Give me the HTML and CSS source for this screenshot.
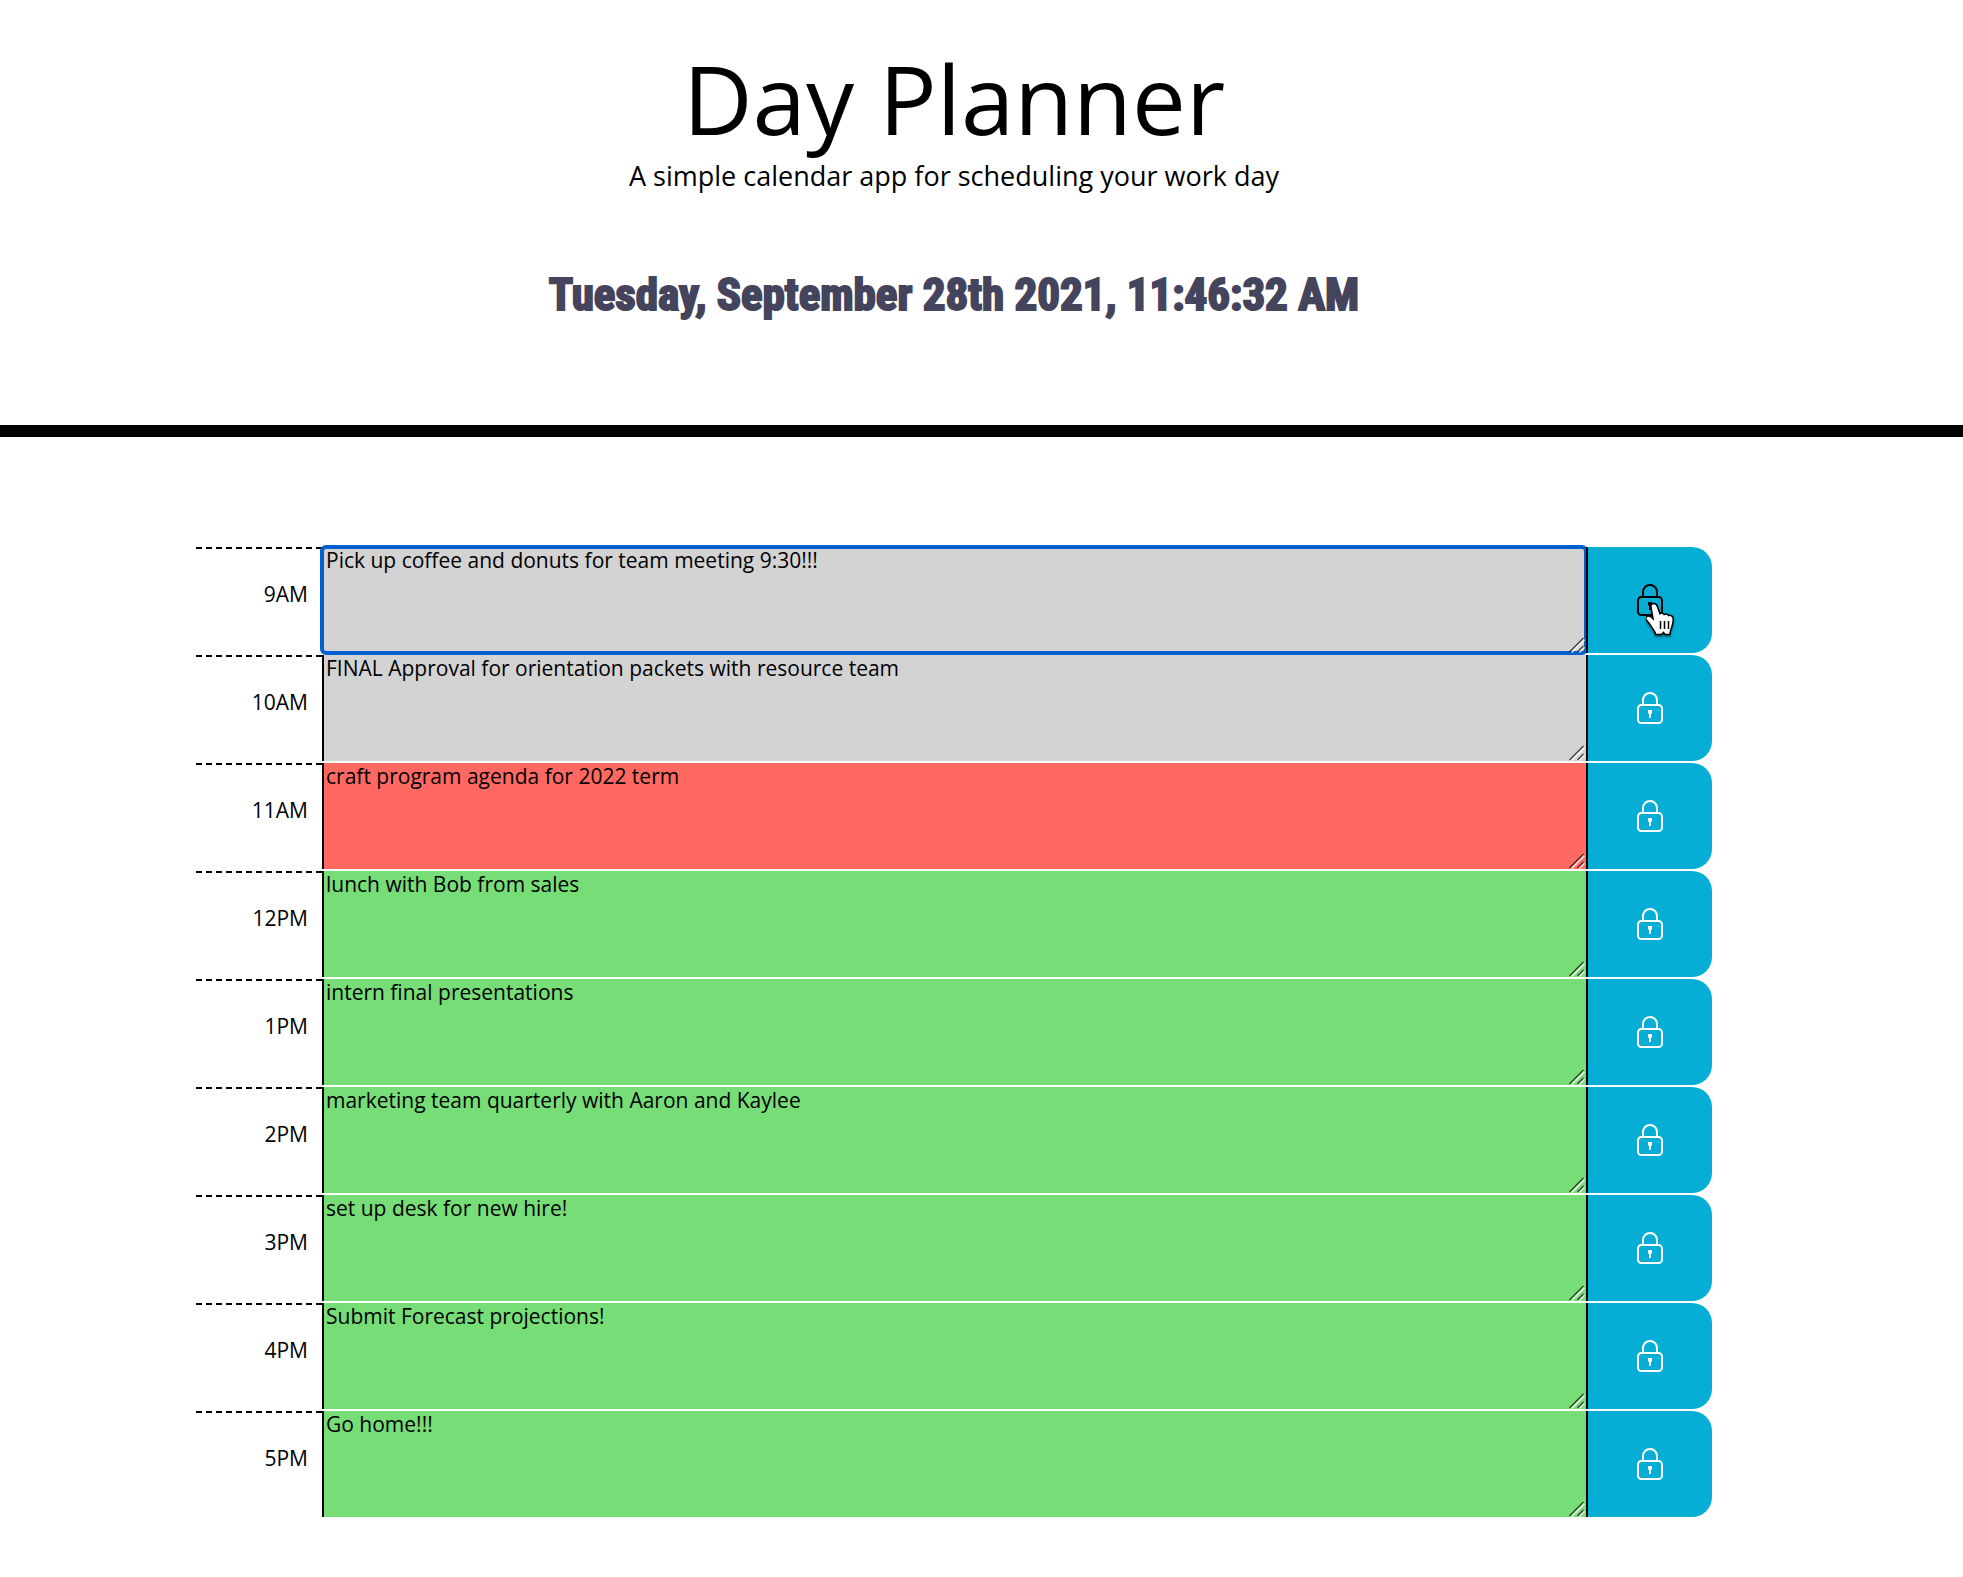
FILE: index.html
```html
<!DOCTYPE html>
<html lang="en">
<head>
<meta charset="utf-8">
<meta name="viewport" content="width=device-width, initial-scale=1">
<title>Day Planner</title>
<link rel="stylesheet" href="styles.css">
</head>
<body>
<svg class="sprite" aria-hidden="true">
  <symbol id="lock" viewBox="0 0 26 32">
    <rect x="1" y="13" width="24" height="18" rx="3.5" fill="none" stroke="currentColor" stroke-width="2"/>
    <path d="M6 13V8a7 7 0 0 1 14 0v5" fill="none" stroke="currentColor" stroke-width="2"/>
    <path d="M11 18h4v3.500h-1v4.500h-2v-4.500h-1z" fill="currentColor"/>
  </symbol>
  <symbol id="grip" viewBox="0 0 16 16">
    <path d="M2.500 15.500L15.500 2.500M10 15.500L15.500 10" stroke="#fff" stroke-opacity=".7" stroke-width="2" fill="none"/>
    <path d="M.500 15L14.500 1M8.500 15L14.500 9" stroke="#000" stroke-opacity=".7" stroke-width="1.400" fill="none"/>
  </symbol>
</svg>
<header class="header">
  <h1 class="title">Day Planner</h1>
  <p class="lead">A simple calendar app for scheduling your work day</p>
  <p class="date">Tuesday, September 28th 2021, 11:46:32 AM</p>
</header>
<main class="planner">
  <div class="row">
    <label class="hour" for="h9">9AM</label>
    <div class="slot"><textarea class="entry past active" id="h9">Pick up coffee and donuts for team meeting 9:30!!!</textarea><svg class="grip" aria-hidden="true"><use href="#grip"/></svg></div>
    <button class="save hovered" aria-label="Save 9AM"><svg class="lock"><use href="#lock"/></svg>
      <svg class="pointer" viewBox="0 0 32 36" aria-hidden="true"><path d="M8 1.500c2 0 3 1.500 3.500 3.200l2.500 7c1-.9 3.500-.8 4.200.8 1.200-.9 3.500-.5 4.200 1 1.300-.7 4-.2 4.600 2.100.8 3-.5 7.500-1.500 10.400-.7 2-1.500 3-1.500 6.500h-5l-1.500-2-1.800 2h-6c-.7-3.500-3-5.500-4.700-8.500-1.400-2.400-2.800-3.800-4.500-5.700-1.600-1.900-.5-4.200 1.800-4.200 2 0 3.500 1.300 4.700 2.600L5 5C4.300 3 6 1.500 8 1.500z" fill="#fff" stroke="#000" stroke-width="1.500"/><path d="M14.500 19v8M18.500 19v8M22.500 19v8" stroke="#000" stroke-width="1.500"/></svg>
    </button>
  </div>
  <div class="row">
    <label class="hour" for="h10">10AM</label>
    <div class="slot"><textarea class="entry past" id="h10">FINAL Approval for orientation packets with resource team</textarea><svg class="grip" aria-hidden="true"><use href="#grip"/></svg></div>
    <button class="save" aria-label="Save 10AM"><svg class="lock"><use href="#lock"/></svg></button>
  </div>
  <div class="row">
    <label class="hour" for="h11">11AM</label>
    <div class="slot"><textarea class="entry present" id="h11">craft program agenda for 2022 term</textarea><svg class="grip" aria-hidden="true"><use href="#grip"/></svg></div>
    <button class="save" aria-label="Save 11AM"><svg class="lock"><use href="#lock"/></svg></button>
  </div>
  <div class="row">
    <label class="hour" for="h12">12PM</label>
    <div class="slot"><textarea class="entry future" id="h12">lunch with Bob from sales</textarea><svg class="grip" aria-hidden="true"><use href="#grip"/></svg></div>
    <button class="save" aria-label="Save 12PM"><svg class="lock"><use href="#lock"/></svg></button>
  </div>
  <div class="row">
    <label class="hour" for="h13">1PM</label>
    <div class="slot"><textarea class="entry future" id="h13">intern final presentations</textarea><svg class="grip" aria-hidden="true"><use href="#grip"/></svg></div>
    <button class="save" aria-label="Save 1PM"><svg class="lock"><use href="#lock"/></svg></button>
  </div>
  <div class="row">
    <label class="hour" for="h14">2PM</label>
    <div class="slot"><textarea class="entry future" id="h14">marketing team quarterly with Aaron and Kaylee</textarea><svg class="grip" aria-hidden="true"><use href="#grip"/></svg></div>
    <button class="save" aria-label="Save 2PM"><svg class="lock"><use href="#lock"/></svg></button>
  </div>
  <div class="row">
    <label class="hour" for="h15">3PM</label>
    <div class="slot"><textarea class="entry future" id="h15">set up desk for new hire!</textarea><svg class="grip" aria-hidden="true"><use href="#grip"/></svg></div>
    <button class="save" aria-label="Save 3PM"><svg class="lock"><use href="#lock"/></svg></button>
  </div>
  <div class="row">
    <label class="hour" for="h16">4PM</label>
    <div class="slot"><textarea class="entry future" id="h16">Submit Forecast projections!</textarea><svg class="grip" aria-hidden="true"><use href="#grip"/></svg></div>
    <button class="save" aria-label="Save 4PM"><svg class="lock"><use href="#lock"/></svg></button>
  </div>
  <div class="row">
    <label class="hour" for="h17">5PM</label>
    <div class="slot"><textarea class="entry future" id="h17">Go home!!!</textarea><svg class="grip" aria-hidden="true"><use href="#grip"/></svg></div>
    <button class="save" aria-label="Save 5PM"><svg class="lock"><use href="#lock"/></svg></button>
  </div>
</main>
</body>
</html>
```

FILE: styles.css
```css
* { box-sizing: border-box; }

body {
  margin: 0;
  background: #fff;
  color: #000;
  font-family: "Open Sans", sans-serif;
  font-size: 21px;
  line-height: 28px;
}

.sprite { display: none; }

.header {
  padding: 42px 55px 100px 0;
  border-bottom: 12px solid #000;
  text-align: center;
}

.title {
  margin: 0;
  font-size: 96px;
  font-weight: 400;
  line-height: 112px;
}

.lead {
  margin: 0;
  font-size: 27px;
  line-height: 44px;
}

.date {
  margin: 67px 0 0;
  color: #44445c;
  font-family: Impact, "Roboto Condensed", "Liberation Sans", sans-serif;
  font-size: 45px;
  font-weight: 700;
  line-height: 60px;
  -webkit-text-stroke: 2px #44445c;
}

.planner {
  display: grid;
  gap: 2px;
  padding: 110px 251px 60px 196px;
}

.row {
  display: grid;
  grid-template-columns: 126px 1fr 126px;
  min-height: 106px;
}

.hour {
  padding: 31px 14px 0 0;
  border-top: 2px dashed #000;
  text-align: right;
}

.slot {
  position: relative;
  display: flex;
}

.entry {
  flex: 1;
  margin: 0;
  padding: 0 2px;
  border: 0;
  border-left: 2px solid #000;
  border-radius: 0;
  color: #000;
  font: inherit;
  line-height: 26px;
  resize: none;
}

.past { background: #d3d3d3; }
.present { background: #ff6961; }
.future { background: #77dd77; }

.active {
  border-radius: 4px;
  outline: 4px solid #0060d0;
  outline-offset: -2px;
}

.grip {
  position: absolute;
  right: 1px;
  bottom: 0;
  width: 16px;
  height: 16px;
}

.save {
  position: relative;
  display: flex;
  align-items: center;
  justify-content: center;
  padding: 0;
  border: 0;
  border-left: 2px solid #000;
  border-radius: 0 20px 20px 0;
  background: #06aed5;
  color: #fff;
  cursor: pointer;
}

.hovered { color: #000; }

.lock {
  width: 26px;
  height: 32px;
}

.pointer {
  position: absolute;
  top: 55px;
  left: 58px;
  width: 32px;
  height: 36px;
  filter: drop-shadow(0 2px 1px rgba(0, 0, 0, .4));
}
```
